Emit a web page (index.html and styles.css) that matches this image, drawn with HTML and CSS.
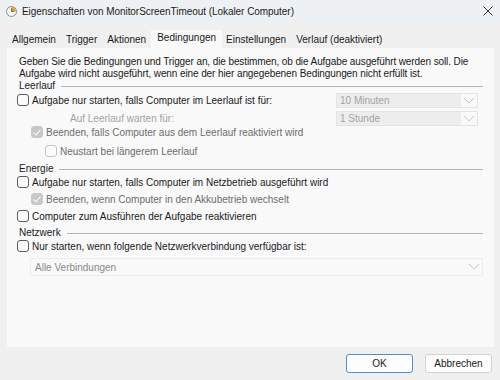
FILE: index.html
```html
<!DOCTYPE html>
<html lang="de">
<head>
<meta charset="utf-8">
<title>Eigenschaften von MonitorScreenTimeout</title>
<link rel="stylesheet" href="styles.css">
</head>
<body>
<div class="window">
  <div class="titlebar">
    <svg class="title-icon" width="11" height="11" viewBox="0 0 11 11">
      <circle cx="5.5" cy="5.5" r="5" fill="#f4f4f4" stroke="#8c8c8c" stroke-width="1"/>
      <path d="M5.5 5.5 L5.5 1 A4.5 4.5 0 0 1 10 5.5 Z" fill="#e3a21a"/>
      <path d="M5.5 2.5 V5.5 H8" fill="none" stroke="#6b6b6b" stroke-width="1"/>
    </svg>
    <span class="title-text">Eigenschaften von MonitorScreenTimeout (Lokaler Computer)</span>
    <svg class="close" width="10" height="10" viewBox="0 0 10 10">
      <path d="M0.5 0.5 L9.5 9.5 M9.5 0.5 L0.5 9.5" stroke="#333" stroke-width="1"/>
    </svg>
  </div>

  <div class="tabs">
    <div class="tab">Allgemein</div>
    <div class="tab">Trigger</div>
    <div class="tab">Aktionen</div>
    <div class="tab active">Bedingungen</div>
    <div class="tab">Einstellungen</div>
    <div class="tab">Verlauf (deaktiviert)</div>
  </div>

  <div class="panel">
    <p class="desc">Geben Sie die Bedingungen und Trigger an, die bestimmen, ob die Aufgabe ausgeführt werden soll. Die Aufgabe wird nicht ausgeführt, wenn eine der hier angegebenen Bedingungen nicht erfüllt ist.</p>

    <div class="group-head"><span>Leerlauf</span><span class="rule"></span></div>
    <div class="row r-idle">
      <span class="cb"></span><span class="label">Aufgabe nur starten, falls Computer im Leerlauf ist für:</span>
      <div class="combo"><span class="combo-text">10 Minuten</span><svg class="chev" width="16" height="13" viewBox="0 0 16 13"><path d="M3 4 L8 9 L13 4" fill="none" stroke="#c8c8c8" stroke-width="1"/></svg></div>
    </div>
    <div class="row r-wait">
      <span class="label faint">Auf Leerlauf warten für:</span>
      <div class="combo"><span class="combo-text">1 Stunde</span><svg class="chev" width="16" height="13" viewBox="0 0 16 13"><path d="M3 4 L8 9 L13 4" fill="none" stroke="#c8c8c8" stroke-width="1"/></svg></div>
    </div>
    <div class="row indent1 r-stop">
      <span class="cb checked"></span><span class="label gray">Beenden, falls Computer aus dem Leerlauf reaktiviert wird</span>
    </div>
    <div class="row indent2 r-restart">
      <span class="cb off"></span><span class="label gray">Neustart bei längerem Leerlauf</span>
    </div>

    <div class="group-head g-energy"><span>Energie</span><span class="rule"></span></div>
    <div class="row r-ac">
      <span class="cb"></span><span class="label">Aufgabe nur starten, falls Computer im Netzbetrieb ausgeführt wird</span>
    </div>
    <div class="row indent1 r-batt">
      <span class="cb checked"></span><span class="label gray">Beenden, wenn Computer in den Akkubetrieb wechselt</span>
    </div>
    <div class="row r-wake">
      <span class="cb"></span><span class="label">Computer zum Ausführen der Aufgabe reaktivieren</span>
    </div>

    <div class="group-head g-net"><span>Netzwerk</span><span class="rule"></span></div>
    <div class="row r-net">
      <span class="cb"></span><span class="label">Nur starten, wenn folgende Netzwerkverbindung verfügbar ist:</span>
    </div>
    <div class="netcombo"><span class="net-text">Alle Verbindungen</span><svg class="chev" width="16" height="16" viewBox="0 0 16 16"><path d="M3 5 L8 10 L13 5" fill="none" stroke="#c8c8c8" stroke-width="1"/></svg></div>
  </div>

  <div class="footer">
    <button class="btn primary">OK</button>
    <button class="btn">Abbrechen</button>
  </div>
</div>
</body>
</html>
```

FILE: styles.css
```css
* { box-sizing: border-box; }
html, body { margin: 0; padding: 0; }
body {
  width: 500px;
  height: 380px;
  background: #f0f0f0;
  font-family: "Liberation Sans", Arial, sans-serif;
  font-size: 10px;
  color: #1a1a1a;
  overflow: hidden;
}
.window { width: 500px; height: 380px; display: flex; flex-direction: column; }

.titlebar {
  height: 22px;
  display: flex;
  align-items: center;
  padding: 0 0 0 6px;
  background: #eef1f4;
}
.title-icon { flex: none; }
.title-text { margin-left: 5px; font-size: 10px; letter-spacing: -0.05px; color: #1a1a1a; }
.close { margin-left: auto; margin-right: 7px; }

.tabs {
  display: flex;
  align-items: flex-end;
  height: 26px;
  padding-left: 8px;
}
.tab {
  height: 17px;
  line-height: 17px;
  padding: 0 4px;
  margin-right: 2px;
  color: #1a1a1a;
}
.tab.active {
  background: #f9f9f9;
  height: 18px;
  line-height: 16px;
  padding: 0 6px;
  margin: 0 0 0 -1px;
}

.panel {
  margin: 0 6px 0 7px;
  height: 299px;
  background: #f9f9f9;
  padding: 8px 11px 0 10px;
  display: flex;
  flex-direction: column;
}
.desc { margin: 0; line-height: 12px; padding-left: 2px; letter-spacing: -0.1px; }

.group-head {
  display: flex;
  align-items: center;
  height: 12px;
  line-height: 12px;
  padding-left: 2px;
}
.group-head .rule {
  flex: 1;
  height: 1px;
  background: #b4b4b4;
  margin-left: 6px;
}
.g-energy { margin-top: 5px; }
.g-net { margin-top: 4px; }

.row {
  display: flex;
  align-items: center;
  height: 14px;
}
.r-idle { margin-top: 1px; }
.r-wait { margin-top: 4px; padding-left: 53px; }
.r-stop { margin-top: 0; }
.r-restart { margin-top: 5px; }
.r-ac { margin-top: 0; }
.r-batt { margin-top: 3px; }
.r-wake { margin-top: 3px; }
.r-net { margin-top: 0; }

.indent1 { padding-left: 14px; }
.indent2 { padding-left: 28px; }

.cb {
  flex: none;
  width: 12px;
  height: 12px;
  border: 1px solid #5c5c5c;
  border-radius: 3px;
  background: #fbfbfb;
  margin-right: 3px;
  position: relative;
}
.cb.off { border-color: #c4c4c4; }
.cb.checked { background: #c8c8c8; border-color: #c8c8c8; }
.cb.checked::after {
  content: "";
  position: absolute;
  left: 3px;
  top: 1px;
  width: 3px;
  height: 6px;
  border-right: 1.5px solid #fff;
  border-bottom: 1.5px solid #fff;
  transform: rotate(40deg);
}
.label { white-space: nowrap; }
.gray { color: #6d6d6d; }
.faint { color: #a3a3a3; }

.combo {
  margin-left: auto;
  margin-right: 5px;
  width: 142px;
  height: 15px;
  display: flex;
  align-items: center;
  border: 1px solid #e4e4e4;
  background: #f9f9f9;
}
.combo-text {
  flex: 1;
  height: 100%;
  background: #ededed;
  color: #a3a3a3;
  padding-left: 3px;
  line-height: 13px;
}
.chev { flex: none; }

.netcombo {
  margin-top: 5px;
  margin-left: 13px;
  height: 18px;
  display: flex;
  align-items: center;
  border: 1px solid #ececec;
  background: #f9f9f9;
  color: #8a8a8a;
  padding-left: 4px;
}
.net-text { flex: 1; }

.footer {
  display: flex;
  justify-content: flex-end;
  gap: 12px;
  padding: 7px 8px 0 0;
}
.btn {
  width: 67px;
  height: 19px;
  font-family: inherit;
  font-size: 10px;
  color: #1a1a1a;
  background: #fdfdfd;
  border: 1px solid #d3d3d3;
  border-radius: 3px;
  padding: 0;
}
.btn.primary { border-color: #4d8fd0; }
```
